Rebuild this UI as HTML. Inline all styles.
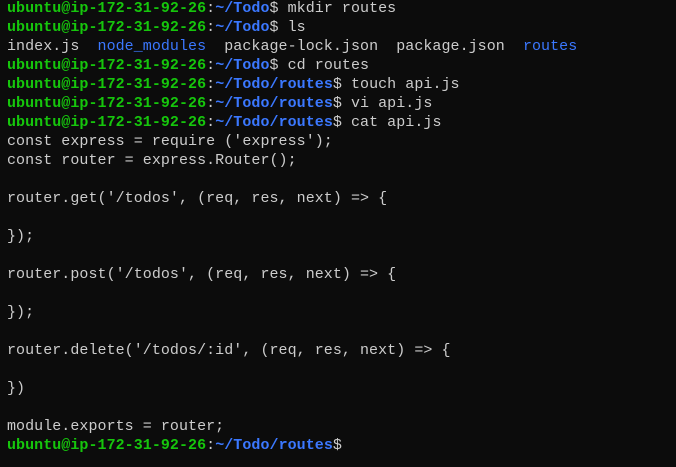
<!DOCTYPE html>
<html><head><meta charset="utf-8"><style>
html,body{margin:0;padding:0;background:#0c0c0c;width:676px;height:467px;overflow:hidden}
pre{margin:0;position:absolute;left:7px;top:-1px;font-family:"Liberation Mono",monospace;font-size:15px;line-height:19px;color:#cccccc;letter-spacing:0.05px}
.g{color:#16c60c;font-weight:bold}
.b{color:#3b78ff;font-weight:bold}
.d{color:#3b78ff}
</style></head><body><pre><span class="g">ubuntu@ip-172-31-92-26</span>:<span class="b">~/Todo</span>$ mkdir routes
<span class="g">ubuntu@ip-172-31-92-26</span>:<span class="b">~/Todo</span>$ ls
index.js  <span class="d">node_modules</span>  package-lock.json  package.json  <span class="d">routes</span>
<span class="g">ubuntu@ip-172-31-92-26</span>:<span class="b">~/Todo</span>$ cd routes
<span class="g">ubuntu@ip-172-31-92-26</span>:<span class="b">~/Todo/routes</span>$ touch api.js
<span class="g">ubuntu@ip-172-31-92-26</span>:<span class="b">~/Todo/routes</span>$ vi api.js
<span class="g">ubuntu@ip-172-31-92-26</span>:<span class="b">~/Todo/routes</span>$ cat api.js
const express = require ('express');
const router = express.Router();

router.get('/todos', (req, res, next) => {

});

router.post('/todos', (req, res, next) => {

});

router.delete('/todos/:id', (req, res, next) => {

})

module.exports = router;
<span class="g">ubuntu@ip-172-31-92-26</span>:<span class="b">~/Todo/routes</span>$</pre></body></html>
